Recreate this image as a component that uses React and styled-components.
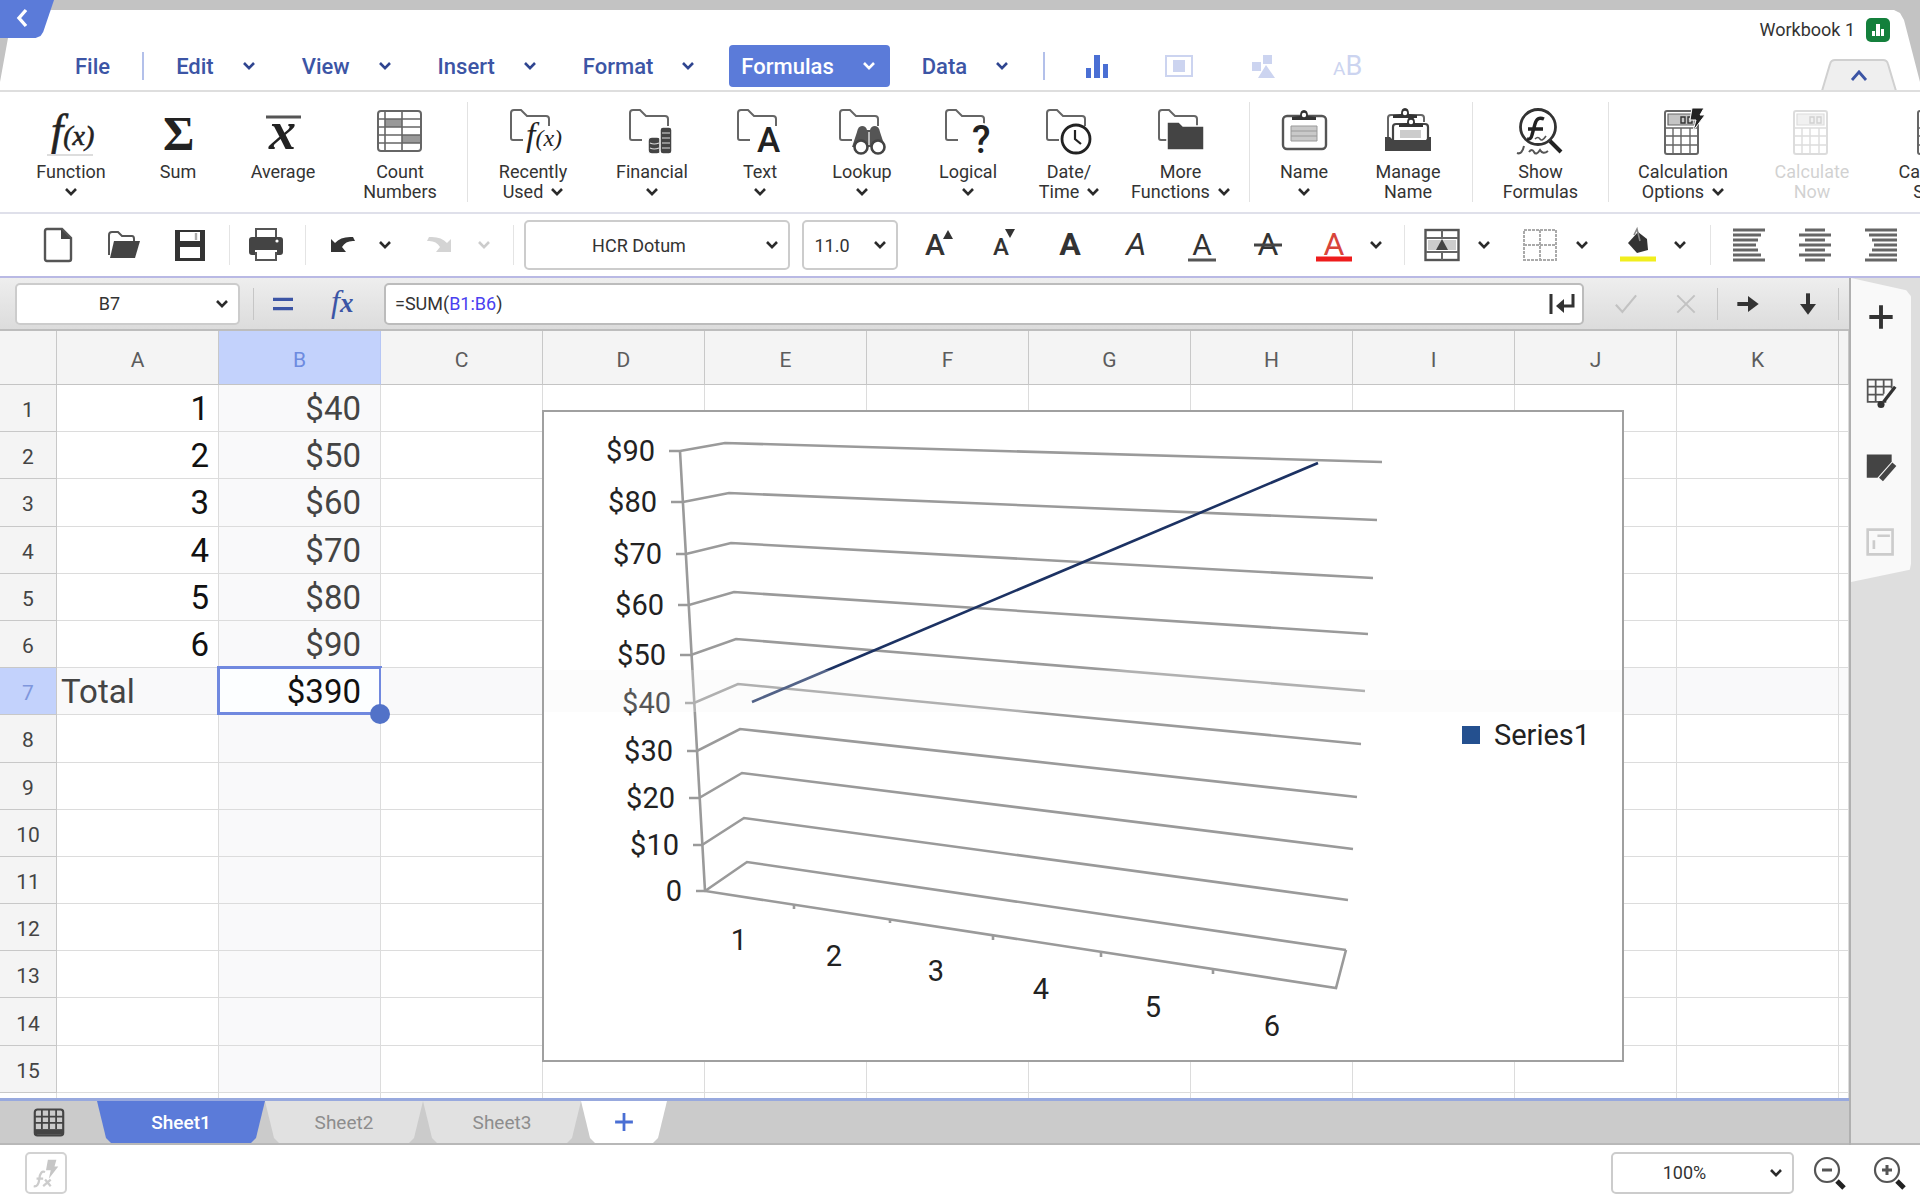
import React, {useState} from 'react';
import styled, {createGlobalStyle, css} from 'styled-components';

const GlobalStyle = createGlobalStyle`
    *{
        box-sizing:border-box;
    }
    body{
        margin:0;
        font-family:Roboto, "Liberation Sans", sans-serif;
        color:#333;
    }
    button, select, input{
        font-family:inherit;
        color:inherit;
    }
    button{
        padding:0;
        border:0;
        background:none;
        cursor:pointer;
    }
    svg{
        overflow:visible;
    }
`
const Shell = styled.div`
    position:relative;
    display:flex;
    flex-direction:column;
    min-height:100vh;
    padding-top:10px;
    background-color:#c3c3c3;
    overflow:hidden;
`
const BackBtn = styled.button`
    position:absolute;
    left:0;
    top:0;
    width:54px;
    height:38px;
    padding-right:10px;
    background-color:#5b7bd9;
    clip-path:polygon(0 0, 100% 0, 80% 84%, 75% 95%, 66% 100%, 0 100%);
    z-index:1;
`
const TopPanel = styled.header`
    display:flex;
    justify-content:space-between;
    height:80px;
    background-color:#fff;
    clip-path:polygon(12px 0, calc(100% - 26px) 0, calc(100% - 20px) 3px, calc(100% - 16px) 10px, 100% 72px, 100% 100%, 0 100%, 0 72px, 8px 28px);
`
const MenuBar = styled.nav`
    display:flex;
    align-items:center;
    gap:20px;
    padding:34px 0 2px 63px;
`
const MenuItem = styled.button`
    display:flex;
    align-items:center;
    gap:29px;
    height:42px;
    padding:0 15px 0 12px;
    border-radius:4px;
    font-size:22px;
    font-weight:500;
    color:#3c55a5;
    ${props => props.$active && css`
        background-color:#5b7bd9;
        color:#fff;
    `}
`
const MenuFile = styled(MenuItem)`
    padding-right:12px;
`
const MenuLine = styled.div`
    width:2px;
    height:28px;
    background-color:#b3c0ea;
`
const MenuIcons = styled.div`
    display:flex;
    align-items:center;
    gap:56px;
    padding-left:20px;
`
const FileInfo = styled.div`
    display:flex;
    flex-direction:column;
    justify-content:space-between;
    align-items:flex-end;
    padding:6px 23px 0 0;
`
const FileName = styled.div`
    display:flex;
    align-items:center;
    gap:11px;
    padding-right:7px;
    font-size:18px;
    line-height:28px;
`
const FoldBtn = styled.button`
    height:31px;
    line-height:0;
`
const Ribbon = styled.div`
    display:flex;
    align-items:center;
    height:122px;
    border-top:2px solid #dedede;
    background-color:#fff;
    overflow:hidden;
`
const RibbonGroup = styled.div`
    display:flex;
    flex:none;
    height:100px;
    padding:0 ${props => props.$right || 0}px 0 ${props => props.$left || 0}px;
    & + &{
        border-left:1px solid #e2e2e2;
    }
`
const Tool = styled.button`
    display:flex;
    flex-direction:column;
    align-items:center;
    justify-content:flex-end;
    gap:6px;
    flex:none;
    width:${props => props.$width}px;
    opacity:${props => props.disabled ? 0.22 : 1};
`
const ToolLabel = styled.span`
    display:flex;
    flex-direction:column;
    align-items:center;
    height:40px;
    font-size:18px;
    line-height:20px;
`
const LabelLine = styled.span`
    display:flex;
    align-items:center;
    gap:8px;
    height:20px;
    white-space:nowrap;
`
const QuickBar = styled.div`
    display:flex;
    align-items:center;
    height:66px;
    padding-left:25px;
    border-top:2px solid #dfe0ea;
    border-bottom:2px solid #b9b9e4;
    background-color:#fff;
    overflow:hidden;
`
const QuickBtn = styled.button`
    display:flex;
    flex:none;
    align-items:center;
    justify-content:center;
    width:${props => props.$width || 66}px;
    height:50px;
    margin-left:${props => props.$gap || 0}px;
`
const QuickLine = styled.div`
    flex:none;
    width:1px;
    height:40px;
    margin:0 ${props => props.$right}px 0 ${props => props.$left}px;
    background-color:#e4e4e4;
`
const SelectBox = styled.div`
    position:relative;
    flex:none;
    width:${props => props.$width}px;
    height:${props => props.$height || 50}px;
    & + &{
        margin:0 7px 0 12px;
    }
    svg{
        position:absolute;
        right:12px;
        top:calc(50% - 4px);
        pointer-events:none;
    }
`
const Select = styled.select`
    appearance:none;
    width:100%;
    height:100%;
    padding:0 36px 0 0;
    border:2px solid #ccc;
    border-radius:5px;
    background-color:#fff;
    font-size:18px;
    text-align-last:center;
`
const Work = styled.div`
    display:flex;
    flex:1;
    background-color:#dedede;
`
const Main = styled.main`
    display:flex;
    flex-direction:column;
    flex:1;
    min-width:0;
    border-right:2px solid #b0b0b0;
`
const FormulaBar = styled.div`
    display:flex;
    align-items:center;
    height:53px;
    padding-left:15px;
    border-bottom:2px solid #bdbdbd;
    background-image:linear-gradient(#eee, #dcdcdc);
`
const BarLine = styled.div`
    width:1px;
    height:32px;
    margin:0 ${props => props.$right}px 0 ${props => props.$left}px;
    background-color:#c6c6c6;
`
const FormulaField = styled.div`
    display:flex;
    flex:1;
    align-items:center;
    justify-content:space-between;
    height:42px;
    margin-left:10px;
    padding:0 7px 0 9px;
    border:2px solid #bcbcbc;
    border-radius:5px;
    background-color:#fff;
`
const FormulaText = styled.div`
    flex:1;
    font-size:18px;
    line-height:24px;
    outline:none;
    span{
        color:#4a3ff0;
    }
`
const GridArea = styled.div`
    position:relative;
    display:grid;
    flex:1;
    background-color:#fff;
    overflow:hidden;
`
const Sheet = styled.table`
    width:100%;
    height:100%;
    table-layout:fixed;
    border-collapse:separate;
    border-spacing:0;
    th, td{
        height:47px;
        padding:0;
        border-right:1px solid #dcdcdc;
        border-bottom:1px solid #dcdcdc;
    }
    tfoot td{
        height:5px;
        border-bottom:0;
    }
`
const ColHead = styled.th`
    &&{
        height:54px;
        padding-top:4px;
        border-color:${props => props.$active ? '#b6c6f5' : '#c8c8c8'};
        border-bottom-color:#c4c4c4;
    }
    background-color:${props => props.$active ? '#c3d2fc' : '#f4f4f4'};
    font-size:21px;
    font-weight:400;
    color:${props => props.$active ? '#6d8be0' : '#5c5c5c'};
`
const RowHead = styled.th`
    &&{
        border-color:#c8c8c8;
        padding-top:4px;
    }
    background-color:${props => props.$active ? '#c3d2fc' : '#f4f4f4'};
    font-size:21px;
    font-weight:400;
    color:${props => props.$active ? '#7f97dd' : '#444'};
`
const Cell = styled.td`
    position:relative;
    background-color:${props => props.$tint ? '#f9f9fa' : '#fff'};
    font-size:33px;
    line-height:38px;
    color:${props => props.$strong ? '#111' : '#444'};
    text-align:${props => props.$align || 'right'};
    white-space:nowrap;
    &&{
        padding:2px ${props => props.$pad || 9}px 0 4px;
    }
    ${props => props.$selected && css`
        background-color:#fcfeff;
        &::after{
            content:'';
            position:absolute;
            inset:-2px -2px -1px -2px;
            border:3px solid #7189df;
        }
    `}
`
const Handle = styled.span`
    position:absolute;
    right:-10px;
    bottom:-10px;
    width:20px;
    height:20px;
    border-radius:50%;
    background-color:#5272c8;
    z-index:1;
`
const ChartBox = styled.figure`
    position:absolute;
    left:542px;
    top:79px;
    width:1082px;
    height:652px;
    margin:0;
    border:2px solid #a0a0a0;
    background-color:#fff;
    svg{
        display:block;
        margin:-2px;
    }
    text{
        font-size:29px;
        fill:#222;
    }
`
const TabBar = styled.div`
    display:flex;
    height:47px;
    border-top:3px solid #98a9de;
    border-bottom:2px solid #b8b8b8;
    background-color:#cbcbcb;
`
const ListBtn = styled.button`
    width:97px;
    line-height:0;
`
const Tab = styled.button`
    width:${props => props.$width}px;
    background-color:${props => props.$active ? '#5b7bd9' : '#e1e1e1'};
    clip-path:polygon(0 0, 100% 0, calc(100% - 9px) 88%, calc(100% - 14px) 100%, 14px 100%, 9px 88%);
    font-size:19px;
    font-weight:${props => props.$active ? 500 : 400};
    color:${props => props.$active ? '#fff' : '#8d8d8d'};
`
const AddTab = styled(Tab)`
    background-color:#fff;
    line-height:0;
`
const SideBar = styled.aside`
    width:69px;
    border-bottom:2px solid #b8b8b8;
`
const SideTab = styled.div`
    display:flex;
    flex-direction:column;
    align-items:center;
    gap:43px;
    width:60px;
    height:304px;
    padding-top:23px;
    background-color:#f9f9f9;
    clip-path:polygon(0 0, 92% 4%, 100% 6%, 100% 94%, 98% 96%, 0 100%);
`
const SideBtn = styled.button`
    width:32px;
    height:32px;
    line-height:0;
`
const StatusBar = styled.footer`
    display:flex;
    align-items:center;
    height:55px;
    padding:0 1px 0 25px;
    background-color:#fff;
`
const StatusBtn = styled.button`
    width:42px;
    height:42px;
    margin-right:auto;
    border:2px solid #d2d2d2;
    border-radius:5px;
    line-height:0;
`
const ZoomBtns = styled.div`
    display:flex;
    padding-left:5px;
`

const SERIF = '"Liberation Serif", serif'

const Caret = ({color = '#2b2b2b'}) => (
    <svg width="12" height="8" viewBox="0 0 12 8" fill="none" stroke={color} strokeWidth="2.6"><path d="M1 1 6 6.2 11 1"/></svg>
)

/* ribbon icons share a 50 x 48 box */
const Icon = ({children}) => (
    <svg width="50" height="48" viewBox="0 0 50 48" fill="none" stroke="#444" strokeWidth="2">{children}</svg>
)
const Folder = ({children}) => (
    <Icon>
        <path stroke="#666" d="M15 32H5q-2 0-2-2V5q0-3 3-3h7l6 6h19q3 0 3 3v7"/>
        {children}
    </Icon>
)
const Clip = ({x = 0, y = 0}) => (
    <g transform={`translate(${x} ${y})`}>
        <path fill="#333" stroke="none" d="M-12 7v-3l8-1q0-6 4-6t4 6l8 1v3z"/>
        <circle cx="0" cy="2" r="2.2" fill="#fff" stroke="none"/>
    </g>
)
const Calculator = ({children}) => (
    <Icon>
        <rect x="7" y="3" width="33" height="43" rx="2" stroke="#666"/>
        <path stroke="#666" strokeWidth="1.4" d="M7 20h33M7 28h33M7 37h33M15 20v26M23 20v26M32 20v26"/>
        <path fill="#c4c4c4" stroke="#666" strokeWidth="1.2" d="M10 6h27v11H10z"/>
        <path stroke="#333" strokeWidth="1.4" d="M23 9h4v6h-4zM30 9h4v6h-4z"/>
        {children}
    </Icon>
)

const icons = {
    fx: (
        <Icon>
            <text x="5" y="37" fontSize="44" fontStyle="italic" fontFamily={SERIF} fill="#222" stroke="#222" strokeWidth="0.6">
                f<tspan fontSize="28">(x)</tspan>
            </text>
            <path stroke="#ddd" d="M1 47h46"/>
        </Icon>
    ),
    sum: <Icon><text x="10" y="42" fontSize="48" fontWeight="bold" fontFamily={SERIF} fill="#222" stroke="none">Σ</text></Icon>,
    avg: (
        <Icon>
            <path strokeWidth="3" stroke="#555" d="M8 9h35"/>
            <text x="11" y="41" fontSize="54" fontWeight="bold" fontStyle="italic" fontFamily={SERIF} fill="#222" stroke="none">x</text>
        </Icon>
    ),
    count: (
        <Icon>
            <rect x="3" y="3" width="43" height="40" rx="3" stroke="#666"/>
            <path fill="#999" stroke="none" d="M10 11h17v8H10zM27 27h18v8H27z"/>
            <path strokeWidth="1.6" stroke="#666" d="M3 11h43M3 19h43M3 27h43M3 35h43M10 3v40M27 3v40"/>
        </Icon>
    ),
    recent: (
        <Folder>
            <text x="18" y="38" fontSize="34" fontStyle="italic" fontFamily={SERIF} fill="#222" stroke="#fff" strokeWidth="3" paintOrder="stroke">
                f<tspan fontSize="24">(x)</tspan>
            </text>
        </Folder>
    ),
    financial: (
        <Folder>
            <rect x="21" y="29" width="13" height="17" rx="4" fill="#444" stroke="#fff" strokeWidth="1.5"/>
            <rect x="33" y="19" width="12" height="27" rx="3" fill="#444" stroke="#fff" strokeWidth="1.5"/>
            <path stroke="#ddd" strokeWidth="1.2" d="M23 35q4 2 9 0M23 40q4 2 9 0M35 25h8M35 30h8M35 35h8M35 40h8"/>
        </Folder>
    ),
    text: <Folder><text x="22" y="44" fontSize="35" fontWeight="500" fill="#222" stroke="#fff" strokeWidth="4" paintOrder="stroke">A</text></Folder>,
    lookup: (
        <Folder>
            <path fill="#555" stroke="none" d="M20 24q1-6 5-6t5 4h3q1-4 5-4t5 6l5 15H15z"/>
            <circle cx="24" cy="39" r="6.5" fill="#fff" stroke="#444" strokeWidth="2.6"/>
            <circle cx="41" cy="39" r="6.5" fill="#fff" stroke="#444" strokeWidth="2.6"/>
            <path stroke="#bbb" d="M32 24v13"/>
        </Folder>
    ),
    logical: <Folder><text x="29" y="45" fontSize="38" fontWeight="500" fill="#222" stroke="#fff" strokeWidth="4" paintOrder="stroke">?</text></Folder>,
    date: (
        <Folder>
            <circle cx="32" cy="31" r="14" fill="#fff" stroke="#222" strokeWidth="2.8"/>
            <path stroke="#222" strokeWidth="2.2" d="M31 22v9l6 5"/>
        </Folder>
    ),
    more: <Folder><path fill="#444" stroke="#fff" strokeWidth="1.5" d="M11 42V14h12l4 4h21v24z"/></Folder>,
    name: (
        <Icon>
            <rect x="4" y="8" width="43" height="33" rx="4" stroke="#555" strokeWidth="2.4"/>
            <path fill="#c9c9c9" stroke="#999" strokeWidth="1" d="M12 18h26v15H12z"/>
            <path stroke="#999" strokeWidth="1" d="M12 23h26M12 28h26"/>
            <Clip x={25} y={5}/>
        </Icon>
    ),
    manage: (
        <Icon>
            <path stroke="#666" d="M5 32V10q0-3 3-3h30q3 0 3 3v4"/>
            <path fill="#fff" stroke="#444" strokeWidth="2.2" d="M10 32V19q0-3 3-3h29q3 0 3 3v13"/>
            <Clip x={22} y={3}/>
            <Clip x={28} y={12}/>
            <path fill="#ccc" stroke="none" d="M17 22h21v8H17z"/>
            <path fill="#444" stroke="none" d="M2 29h5l3 3h33l2-3h3v14H2z"/>
        </Icon>
    ),
    show: (
        <Icon>
            <path stroke="#555" d="M1 45q5 2 7-7M13 44q3-4 5 0t6-2q3 5 8 1"/>
            <circle cx="22" cy="19" r="17.5" fill="#fff" stroke="#333" strokeWidth="2.8"/>
            <path strokeWidth="4" stroke="#222" d="m34 33 11 11"/>
            <path strokeWidth="3.4" stroke="#222" d="M28 11q-7-3-9 5l-3 11q-1 5-5 4M12 21h15"/>
            <path strokeWidth="1.6" stroke="#555" d="M19 31q3-3 5 0t6-3"/>
        </Icon>
    ),
    options: (
        <Calculator>
            <path fill="#222" stroke="#fff" strokeWidth="1" d="M34 0h12l-4 7h5L35 23l3-11h-6z"/>
        </Calculator>
    ),
    calc: <Calculator/>
}

const ribbonGroups = [
    {left: 17, right: 2, tools: [
        {icon: 'fx', width: 108, lines: ['Function', ''], caret: true},
        {icon: 'sum', width: 106, lines: ['Sum']},
        {icon: 'avg', width: 104, lines: ['Average']},
        {icon: 'count', width: 130, lines: ['Count', 'Numbers']}
    ]},
    {tools: [
        {icon: 'recent', width: 130, lines: ['Recently', 'Used'], caret: true},
        {icon: 'financial', width: 108, lines: ['Financial', ''], caret: true},
        {icon: 'text', width: 108, lines: ['Text', ''], caret: true},
        {icon: 'lookup', width: 96, lines: ['Lookup', ''], caret: true},
        {icon: 'logical', width: 116, lines: ['Logical', ''], caret: true},
        {icon: 'date', width: 86, lines: ['Date/', 'Time'], caret: true},
        {icon: 'more', width: 137, lines: ['More', 'Functions'], caret: true}
    ]},
    {right: 14, tools: [
        {icon: 'name', width: 108, lines: ['Name', ''], caret: true},
        {icon: 'manage', width: 100, lines: ['Manage', 'Name']}
    ]},
    {tools: [{icon: 'show', width: 135, lines: ['Show', 'Formulas']}]},
    {tools: [
        {icon: 'options', width: 148, lines: ['Calculation', 'Options'], caret: true},
        {icon: 'calc', width: 110, lines: ['Calculate', 'Now'], disabled: true},
        {icon: 'calc', width: 138, lines: ['Calculate', 'Sheet']}
    ]}
]

/* quick bar icons share a 36 x 36 box */
const Small = ({children, size = 36}) => (
    <svg width={size} height={size} viewBox="0 0 36 36" fill="none" stroke="#444" strokeWidth="2.4">{children}</svg>
)
const Letter = ({size = 30, x = 18, y = 28, color = '#333', children, ...rest}) => (
    <Small>
        <text x={x} y={y} fontSize={size} fill={color} stroke="none" textAnchor="middle" {...rest}>A</text>
        {children}
    </Small>
)
const UndoIcon = ({color}) => <Small><path fill={color} stroke="none" d="M7 12l4 4q6-7 18-6l2 4q-9-1-13 6l4 5H7z"/></Small>
const Lines = ({rows}) => (
    <Small>
        <path strokeWidth="3" stroke="#666" d={rows.map(([a, b], i) => `M${a} ${3 + i * 5}H${b}`).join('')}/>
    </Small>
)

const QuickTools = () => (
    <QuickBar>
        <QuickBtn aria-label="New"><Small><path stroke="#555" d="M5 4q0-2 2-2h15l9 9v21q0 2-2 2H7q-2 0-2-2z"/><path fill="#444" stroke="none" d="M21 2l10 10H21z"/></Small></QuickBtn>
        <QuickBtn aria-label="Open"><Small><path stroke="#555" strokeWidth="2" d="M3 28V8q0-3 3-3h6l4 4h10q2 0 2 3v3"/><path fill="#444" stroke="none" d="M8 14h26l-5 17H4z"/></Small></QuickBtn>
        <QuickBtn aria-label="Save"><Small><path fill="#333" stroke="none" d="M3 3h30v31H3z"/><path fill="#fff" stroke="none" d="M8 5h20v9H8zM8 20h20v11H8z"/><path stroke="#aaa" d="M24 6v7"/></Small></QuickBtn>
        <QuickLine $left={6} $right={6}/>
        <QuickBtn $width={60} aria-label="Print"><Small><path strokeWidth="2" stroke="#555" d="M8 11V2h20v9M8 25v8h20v-8"/><path fill="#444" stroke="none" d="M1 13q0-3 3-3h28q3 0 3 3v12q0 3-3 3h-3v-5H7v5H4q-3 0-3-3z"/><circle cx="29" cy="14" r="1.6" fill="#fff" stroke="none"/></Small></QuickBtn>
        <QuickLine $left={9} $right={10}/>
        <QuickBtn $width={52} aria-label="Undo"><UndoIcon color="#333"/></QuickBtn>
        <QuickBtn $width={34} aria-label="Undo history"><Caret/></QuickBtn>
        <QuickBtn $width={76} aria-label="Redo" disabled><Small><path fill="#d4d4d4" stroke="none" d="M29 12l-4 4q-6-7-18-6l-2 4q9-1 13 6l-4 5h15z"/></Small></QuickBtn>
        <QuickBtn $width={12} aria-label="Redo history" disabled><Caret color="#ccc"/></QuickBtn>
        <QuickLine $left={23} $right={10}/>
        <SelectBox $width={266}><Select aria-label="Font"><option>HCR Dotum</option></Select><Caret/></SelectBox>
        <SelectBox $width={96}><Select aria-label="Font size"><option>11.0</option></Select><Caret/></SelectBox>
        <QuickBtn aria-label="Grow font"><Letter x={15} size={30} fontWeight="500"><path fill="#333" stroke="none" d="M28 3l5 9H23z"/></Letter></QuickBtn>
        <QuickBtn aria-label="Shrink font"><Letter x={15} size={24} fontWeight="500"><path fill="#333" stroke="none" d="M19 2h10l-5 9z"/></Letter></QuickBtn>
        <QuickBtn aria-label="Bold"><Letter size={32} fontWeight="bold"/></QuickBtn>
        <QuickBtn aria-label="Italic"><Letter size={32} fontStyle="italic"/></QuickBtn>
        <QuickBtn aria-label="Underline"><Letter size={30}><path strokeWidth="3" stroke="#555" d="M4 33h28"/></Letter></QuickBtn>
        <QuickBtn aria-label="Strikethrough"><Letter size={32}><path strokeWidth="3" d="M4 18h28"/></Letter></QuickBtn>
        <QuickBtn aria-label="Font color"><Letter size={32} color="#d8453b"><path strokeWidth="5" stroke="#ee1c1c" d="M0 32h36"/></Letter></QuickBtn>
        <QuickBtn $width={18} aria-label="Pick font color"><Caret/></QuickBtn>
        <QuickLine $left={19} $right={7}/>
        <QuickBtn $width={60} aria-label="Merge cells"><Small><rect x="1.5" y="3" width="33" height="30" stroke="#555"/><path stroke="#666" strokeWidth="2" d="M2 11h32M2 25h32M18 3v8M18 25v8"/><path fill="#ccc" stroke="none" d="M4 13h28v10H4z"/><path fill="#444" stroke="none" d="M18 12l6 11H12z"/></Small></QuickBtn>
        <QuickBtn $width={24} aria-label="Merge options"><Caret/></QuickBtn>
        <QuickBtn $width={60} $gap={14} aria-label="Borders"><Small><path strokeWidth="2" stroke="#aaa" strokeDasharray="3 1" d="M2 3h32v30H2zM18 3v30M2 18h32"/></Small></QuickBtn>
        <QuickBtn $width={24} aria-label="Border options"><Caret/></QuickBtn>
        <QuickBtn $width={60} $gap={14} aria-label="Fill color"><Small><path fill="#333" stroke="none" d="M8 16 18 5l9 7 1 11-11 3z"/><path stroke="#888" strokeWidth="1.6" d="M14 8l3-6 3 12"/><path strokeWidth="5" stroke="#f1ee1d" d="M0 32h36"/></Small></QuickBtn>
        <QuickBtn $width={24} aria-label="Pick fill color"><Caret/></QuickBtn>
        <QuickLine $left={18} $right={5}/>
        <QuickBtn aria-label="Align left"><Lines rows={[[2, 34], [2, 30], [2, 27], [2, 25], [2, 27], [2, 30], [2, 34]]}/></QuickBtn>
        <QuickBtn aria-label="Align center"><Lines rows={[[8, 28], [2, 34], [8, 28], [2, 34], [8, 28], [2, 34], [8, 28]]}/></QuickBtn>
        <QuickBtn aria-label="Align right"><Lines rows={[[2, 34], [6, 34], [9, 34], [11, 34], [9, 34], [6, 34], [2, 34]]}/></QuickBtn>
    </QuickBar>
)

const menus = ['Edit', 'View', 'Insert', 'Format', 'Formulas', 'Data']
const columns = ['A', 'B', 'C', 'D', 'E', 'F', 'G', 'H', 'I', 'J', 'K', '']
const values = {
    A: ['1', '2', '3', '4', '5', '6', 'Total'],
    B: ['$40', '$50', '$60', '$70', '$80', '$90', '$390']
}

/* one entry per price line: tick x, axis point, back corner, right end */
const gridLines = [
    ['$90', 127, 138, 41, 183, 33, 840, 52],
    ['$80', 129, 141, 92, 187, 83, 835, 110],
    ['$70', 134, 144, 144, 189, 133, 831, 168],
    ['$60', 136, 147, 195, 192, 182, 826, 224],
    ['$50', 138, 149, 245, 194, 229, 823, 281],
    ['$40', 143, 152, 293, 196, 274, 819, 334],
    ['$30', 145, 155, 341, 198, 319, 815, 387],
    ['$20', 147, 157, 388, 200, 363, 811, 439],
    ['$10', 151, 160, 435, 202, 408, 806, 490],
    ['0', 154, 163, 481, 205, 452, 804, 540]
]
const xLabels = [[197, 540], [292, 556], [394, 571], [499, 589], [611, 607], [730, 626]]
const xTicks = [[252, 495], [348, 509], [451, 526], [559, 543], [671, 560]]

const Chart = () => (
    <ChartBox>
        <svg width="1082" height="652" viewBox="0 0 1082 652" fill="none" stroke="#9a9a9a" strokeWidth="2.6">
            {gridLines.map(([label, tick, ax, ay, bx, by, cx, cy]) => (
                <g key={label}>
                    <path d={`M${tick} ${ay}H${ax}L${bx} ${by}L${cx} ${cy}`}/>
                    <text x={tick - 14} y={ay + 10} textAnchor="end" stroke="none">{label}</text>
                </g>
            ))}
            <path d="M138 41 163 481 794 578 804 540"/>
            {xTicks.map(([x, y]) => <path key={x} d={`M${x} ${y}v4`}/>)}
            {xLabels.map(([x, y], i) => <text key={x} x={x} y={y} textAnchor="middle" stroke="none">{i + 1}</text>)}
            <path stroke="#1c3263" d="M210 292 776 53"/>
            <rect x="920" y="316" width="18" height="18" fill="#24508f" stroke="none"/>
            <text x="952" y="335" stroke="none">Series1</text>
            <path fill="#f4f4f4" fillOpacity="0.25" stroke="none" d="M2 260h1078v42H2z"/>
        </svg>
    </ChartBox>
)

const SheetGrid = () => {
    const rows = Array.from({length: 15}, (_, i) => i + 1)
    return (
        <GridArea>
            <Sheet>
                <colgroup>
                    <col width="57"/>
                    {columns.map(col => <col key={col} width={col ? 162 : undefined}/>)}
                </colgroup>
                <thead>
                    <tr>
                        <ColHead/>
                        {columns.map(col => <ColHead key={col} $active={col === 'B'}>{col}</ColHead>)}
                    </tr>
                </thead>
                <tbody>
                    {rows.map(row => (
                        <tr key={row}>
                            <RowHead $active={row === 7}>{row}</RowHead>
                            {columns.map(col => {
                                const selected = col === 'B' && row === 7
                                return (
                                    <Cell
                                        key={col}
                                        $selected={selected}
                                        $tint={col === 'B' || row === 7}
                                        $strong={selected || (col === 'A' && row < 7)}
                                        $align={col === 'A' && row === 7 ? 'left' : 'right'}
                                        $pad={col === 'B' ? 19 : 9}
                                    >
                                        {values[col] && values[col][row - 1]}
                                        {selected && <Handle/>}
                                    </Cell>
                                )
                            })}
                        </tr>
                    ))}
                </tbody>
                <tfoot>
                    <tr>
                        <td/>
                        {columns.map(col => <td key={col}/>)}
                    </tr>
                </tfoot>
            </Sheet>
            <Chart/>
        </GridArea>
    )
}

const Magnifier = ({plus}) => (
    <Small>
        <circle cx="16" cy="15" r="12" stroke="#555" strokeWidth="2.2"/>
        <path strokeWidth="5" stroke="#222" d="m26 26 7 7"/>
        <path strokeWidth="3" stroke="#555" d={plus ? 'M11 15h10M16 10v10' : 'M11 15h10'}/>
    </Small>
)

const App = () => {
    const [menu, setMenu] = useState('Formulas')
    const [sheet, setSheet] = useState('Sheet1')

    return (
        <Shell>
            <GlobalStyle/>
            <BackBtn aria-label="Back">
                <svg width="12" height="18" viewBox="0 0 12 18" fill="none" stroke="#fff" strokeWidth="3.4"><path d="M10 1 3 9l7 8"/></svg>
            </BackBtn>
            <TopPanel>
                <MenuBar>
                    <MenuFile>File</MenuFile>
                    <MenuLine/>
                    {menus.map(name => (
                        <MenuItem key={name} $active={menu === name} onClick={() => setMenu(name)}>
                            {name}<Caret color={menu === name ? '#fff' : '#2f4590'}/>
                        </MenuItem>
                    ))}
                    <MenuLine/>
                    <MenuIcons>
                        <svg width="24" height="24" viewBox="0 0 24 24" fill="#4a6fd4"><path d="M1 14h5v10H1zM9 1h6v23H9zM18 10h5v14h-5z"/></svg>
                        <svg width="28" height="24" viewBox="0 0 28 24" fill="none" stroke="#ccd4f0" strokeWidth="2"><path d="M1 2h26v20H1z"/><path fill="#ccd4f0" d="M9 7h10v10H9z"/></svg>
                        <svg width="28" height="24" viewBox="0 0 28 24" fill="#ccd4f0"><path d="M3 8h9v9H3zM14 1h9v9h-9zM17 11l9 13H9z"/></svg>
                        <svg width="34" height="26" viewBox="0 0 34 26" fill="#ccd4f0"><text x="0" y="22" fontSize="19">A<tspan fontSize="27">B</tspan></text></svg>
                    </MenuIcons>
                </MenuBar>
                <FileInfo>
                    <FileName>
                        Workbook 1
                        <svg width="24" height="24" viewBox="0 0 24 24" fill="#fff"><rect width="24" height="24" rx="5" fill="#14803c"/><path d="M6 13h3v5H6zM10 6h4v12h-4zM15 11h3v7h-3z"/></svg>
                    </FileName>
                    <FoldBtn aria-label="Fold ribbon">
                        <svg width="76" height="31" viewBox="0 0 76 31" fill="none"><path fill="#efefef" stroke="#d0d0d0" strokeWidth="2" d="M1 32 9 5q1-4 5-4h48q4 0 5 4l8 27"/><path stroke="#3c55a5" strokeWidth="2.8" d="m31 21 7-8 7 8"/></svg>
                    </FoldBtn>
                </FileInfo>
            </TopPanel>
            <Ribbon>
                {ribbonGroups.map((group, i) => (
                    <RibbonGroup key={i} $left={group.left} $right={group.right}>
                        {group.tools.map(tool => (
                            <Tool key={tool.lines.join(' ')} $width={tool.width} disabled={tool.disabled}>
                                {icons[tool.icon]}
                                <ToolLabel>
                                    {tool.lines.map((line, n) => (
                                        <LabelLine key={n}>{line}{tool.caret && n === 1 && <Caret/>}</LabelLine>
                                    ))}
                                </ToolLabel>
                            </Tool>
                        ))}
                    </RibbonGroup>
                ))}
            </Ribbon>
            <QuickTools/>
            <Work>
                <Main>
                    <FormulaBar>
                        <SelectBox $width={225} $height={42}><Select aria-label="Cell name"><option>B7</option></Select><Caret/></SelectBox>
                        <BarLine $left={13} $right={0}/>
                        <QuickBtn $width={58} aria-label="Insert equals"><Small size={24}><path stroke="#3c55a5" strokeWidth="5" d="M3 11h30M3 25h30"/></Small></QuickBtn>
                        <QuickBtn $width={62} aria-label="Insert function">
                            <svg width="36" height="34" viewBox="0 0 36 34" fill="#3c55a5"><text x="6" y="25" fontSize="32" fontStyle="italic" fontFamily={SERIF}>f<tspan fontSize="27" fontWeight="bold">x</tspan></text></svg>
                        </QuickBtn>
                        <FormulaField>
                            <FormulaText contentEditable suppressContentEditableWarning role="textbox" aria-label="Formula">=SUM(<span>B1:B6</span>)</FormulaText>
                            <svg width="26" height="20" viewBox="0 0 26 20" fill="none" stroke="#333" strokeWidth="3"><path d="M2 0v20M24 0v12H10"/><path fill="#333" stroke="none" d="M15 5v14l-8-7z"/></svg>
                        </FormulaField>
                        <QuickBtn $width={84} aria-label="Accept" disabled><Small size={26}><path stroke="#c2c2c2" strokeWidth="3" d="m4 19 9 10L32 6"/></Small></QuickBtn>
                        <QuickBtn $width={36} aria-label="Cancel" disabled><Small size={24}><path stroke="#c2c2c2" strokeWidth="3" d="m5 5 26 26M31 5 5 31"/></Small></QuickBtn>
                        <BarLine $left={13} $right={0}/>
                        <QuickBtn $width={60} aria-label="Next right"><Small size={24}><path strokeWidth="6" stroke="#333" d="M2 18h20"/><path fill="#333" stroke="none" d="M18 6l16 12-16 12z"/></Small></QuickBtn>
                        <QuickBtn $width={60} aria-label="Next down"><Small size={24}><path strokeWidth="6" stroke="#333" d="M18 2v20"/><path fill="#333" stroke="none" d="M6 18h24L18 34z"/></Small></QuickBtn>
                        <BarLine $left={0} $right={10}/>
                    </FormulaBar>
                    <SheetGrid/>
                    <TabBar>
                        <ListBtn aria-label="Sheet list"><Small size={32}><rect x="2" y="4" width="32" height="29" rx="3"/><path strokeWidth="2" d="M2 12h32M2 19h32M10 4v22M18 4v22M26 4v22"/><path fill="#444" stroke="none" d="M2 26h32v6H2z"/></Small></ListBtn>
                        {['Sheet1', 'Sheet2', 'Sheet3'].map(name => (
                            <Tab key={name} $width={name === 'Sheet1' ? 168 : 158} $active={sheet === name} onClick={() => setSheet(name)}>{name}</Tab>
                        ))}
                        <AddTab $width={86} aria-label="Add sheet"><Small size={20}><path stroke="#4a6fd4" strokeWidth="5" d="M18 2v32M2 18h32"/></Small></AddTab>
                    </TabBar>
                </Main>
                <SideBar>
                    <SideTab>
                        <SideBtn aria-label="Add"><Small size={28}><path strokeWidth="5" stroke="#333" d="M18 3v30M3 18h30"/></Small></SideBtn>
                        <SideBtn aria-label="Table style"><Small size={32}><path strokeWidth="2" stroke="#555" d="M24 29H3V4h27v10M12 4v25M21 4v16M3 12h27M3 21h18"/><path stroke="#333" strokeWidth="3.6" d="M34 12 21 29"/><circle cx="18" cy="32" r="4" fill="#333" stroke="none"/></Small></SideBtn>
                        <SideBtn aria-label="Cell style"><Small size={32}><path fill="#444" stroke="none" d="M2 4h28v8L14 30H2z"/><path stroke="#444" strokeWidth="6" d="M33 15 18 32"/></Small></SideBtn>
                        <SideBtn aria-label="Object style" disabled><Small size={32}><path stroke="#ccc" strokeWidth="3" d="M3 4h28v28H3zM10 26V16M14 11h14"/></Small></SideBtn>
                    </SideTab>
                </SideBar>
            </Work>
            <StatusBar>
                <StatusBtn aria-label="Quick calculation" disabled><Small size={34}><path fill="#c6c6c6" stroke="none" d="M20 4h9l-2 7h4L21 24l2-9h-5z"/><path stroke="#ccc" d="M5 32q5 1 6-8t6-7M8 24h7M15 32l8-7M17 25l6 7"/></Small></StatusBtn>
                <SelectBox $width={183} $height={42}><Select aria-label="Zoom"><option>100%</option></Select><Caret/></SelectBox>
                <ZoomBtns>
                    <QuickBtn $width={60} aria-label="Zoom out"><Magnifier/></QuickBtn>
                    <QuickBtn $width={60} aria-label="Zoom in"><Magnifier plus/></QuickBtn>
                </ZoomBtns>
            </StatusBar>
        </Shell>
    )
}

export default App
